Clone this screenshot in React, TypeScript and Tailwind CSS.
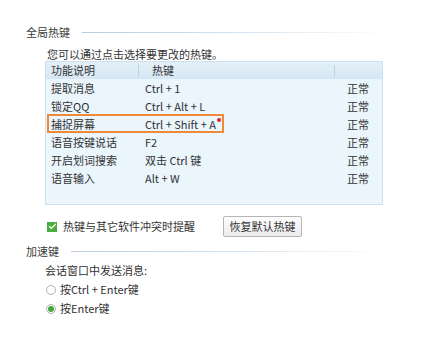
import { Check } from "lucide-react";

const rows = [
  { name: "提取消息", key: "Ctrl + 1", state: "正常" },
  { name: "锁定QQ", key: "Ctrl + Alt + L", state: "正常" },
  { name: "捕捉屏幕", key: "Ctrl + Shift + A", state: "正常", marked: true },
  { name: "语音按键说话", key: "F2", state: "正常" },
  { name: "开启划词搜索", key: "双击 Ctrl 键", state: "正常" },
  { name: "语音输入", key: "Alt + W", state: "正常" },
];

function SectionTitle({ label }: { label: string }) {
  return (
    <div className="flex items-center">
      <span className="text-[11px] leading-4 text-[#3a3a3a]">{label}</span>
      <div className="ml-3 mr-[40px] h-px flex-1 bg-gradient-to-r from-[#b9cde0] via-[#d4e2ee] to-transparent" />
    </div>
  );
}

function Radio({ checked, label }: { checked?: boolean; label: string }) {
  return (
    <div className="flex h-[19px] items-center">
      <span className="flex h-[10px] w-[10px] items-center justify-center rounded-full border border-[#b4b4b4] bg-white">
        {checked && <span className="h-[6px] w-[6px] rounded-full bg-[#3fa93a]" />}
      </span>
      <span className="ml-[4px] text-[11px] text-[#333]">{label}</span>
    </div>
  );
}

export default function App() {
  return (
    <div
      className="h-[337px] w-[432px] bg-white pl-[26px] pt-[24px] text-[#333]"
      style={{ fontFamily: '"Noto Sans CJK SC", "Noto Sans", sans-serif' }}
    >
      <SectionTitle label="全局热键" />

      <div className="pl-[19px]">
        <p className="mt-[7px] pl-[2px] text-[11px] leading-[14px]">您可以通过点击选择要更改的热键。</p>

        <div className="h-[144px] w-[338px] border border-[#cfdfec] bg-[#eaf5fc]">
          <div className="flex h-[17px] items-center bg-gradient-to-b from-[#e4f0f9] to-[#d5e7f4] text-[11px]">
            <div className="w-[92px] pl-[5px]">功能说明</div>
            <div className="h-[12px] w-px bg-[#bfd2e2]" />
            <div className="w-[195px] pl-[13px]">热键</div>
            <div className="h-[12px] w-px bg-[#bfd2e2]" />
          </div>

          {rows.map((row) => (
            <div key={row.name} className="relative flex h-[18px] items-center text-[11px]">
              <div className="w-[93px] pl-[5px]">{row.name}</div>
              <div className="flex w-[196px] items-start pl-[6px]">
                {row.key}
                {row.marked && (
                  <span className="ml-px mt-[2px] h-[4px] w-[4px] rounded-full bg-[#e8212a]" />
                )}
              </div>
              <div className="pl-[12px]">{row.state}</div>
              {row.marked && (
                <div className="absolute left-px top-[-1px] h-[19px] w-[177px] border-2 border-[#ee8a38]" />
              )}
            </div>
          ))}
        </div>

        <div className="mt-[11px] flex items-center">
          <span className="ml-[2px] flex h-[10px] w-[10px] items-center justify-center bg-[#48ae3f]">
            <Check size={9} strokeWidth={3.5} className="text-white" />
          </span>
          <span className="ml-[6px] text-[11px]">热键与其它软件冲突时提醒</span>
          <button className="ml-[28px] h-[21px] w-[79px] rounded-[2px] border border-[#b5b5b5] bg-gradient-to-b from-[#fdfdfd] to-[#ececec] text-[11px] text-[#333]">
            恢复默认热键
          </button>
        </div>
      </div>

      <div className="mt-[6px]">
        <SectionTitle label="加速键" />
      </div>

      <div className="pl-[19px]">
        <p className="mt-[3px] text-[11px] leading-4">会话窗口中发送消息:</p>
        <div className="mt-[2px] pl-[1px]">
          <Radio label="按Ctrl + Enter键" />
          <Radio checked label="按Enter键" />
        </div>
      </div>
    </div>
  );
}
